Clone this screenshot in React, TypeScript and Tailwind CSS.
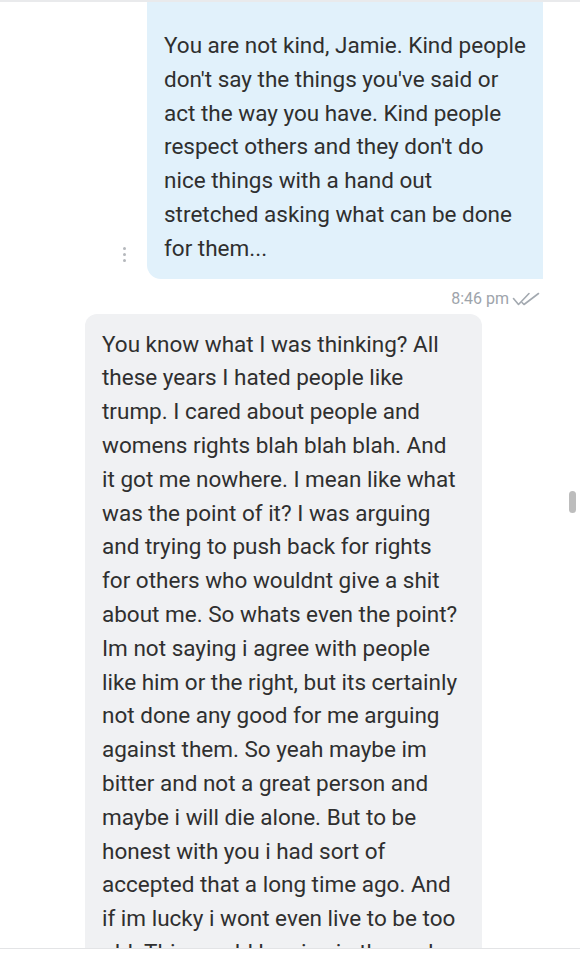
const sent = [
  "You are not kind, Jamie. Kind people",
  "don't say the things you've said or",
  "act the way you have. Kind people",
  "respect others and they don't do",
  "nice things with a hand out",
  "stretched asking what can be done",
  "for them...",
];

const received = [
  "You know what I was thinking? All",
  "these years I hated people like",
  "trump. I cared about people and",
  "womens rights blah blah blah. And",
  "it got me nowhere. I mean like what",
  "was the point of it? I was arguing",
  "and trying to push back for rights",
  "for others who wouldnt give a shit",
  "about me. So whats even the point?",
  "Im not saying i agree with people",
  "like him or the right, but its certainly",
  "not done any good for me arguing",
  "against them. So yeah maybe im",
  "bitter and not a great person and",
  "maybe i will die alone. But to be",
  "honest with you i had sort of",
  "accepted that a long time ago. And",
  "if im lucky i wont even live to be too",
  "old. This would be nice in the end",
];

const DoubleCheck = () => (
  <svg width="28" height="14" viewBox="0 0 28 14" fill="none" stroke="#a3a9b0" strokeWidth="1.6" strokeLinecap="round" strokeLinejoin="round">
    <path d="M1.5 6.5 L6.5 12.5 L17 1.5" />
    <path d="M10 10.5 L12 12.5 L26.5 1.5" />
  </svg>
);

export default function App() {
  return (
    <div
      className="relative h-[960px] w-[580px] overflow-hidden bg-white flex flex-col text-[#2f2f2f]"
      style={{ fontFamily: "Roboto, 'Liberation Sans', sans-serif" }}
    >
      <div className="flex-1 overflow-hidden border-t-2 border-[#e9eaec]">
        <div className="flex items-end justify-end pr-[37px]">
          <div className="flex flex-col gap-[3px] mr-[21px] mb-[17px]">
            <span className="block h-[3px] w-[3px] rounded-full bg-[#b5b8bc]" />
            <span className="block h-[3px] w-[3px] rounded-full bg-[#b5b8bc]" />
            <span className="block h-[3px] w-[3px] rounded-full bg-[#b5b8bc]" />
          </div>
          <div className="w-[396px] bg-[#e1f1fb] rounded-bl-[14px] pl-[17px] pt-[27px] pb-[13px] text-[22.5px] leading-[33.8px]">
            {sent.map((l) => (
              <div key={l} className="whitespace-nowrap">{l}</div>
            ))}
          </div>
        </div>
        <div className="flex items-center justify-end gap-[3px] pr-[40px] mt-[8px] text-[16px] text-[#9ea4ab]">
          <span>8:46 pm</span>
          <DoubleCheck />
        </div>
        <div className="ml-[85px] mt-[3px] w-[397px] bg-[#f0f1f3] rounded-t-[12px] pl-[17px] pt-[14px] text-[22.5px] leading-[33.8px]">
          {received.map((l) => (
            <div key={l} className="whitespace-nowrap">{l}</div>
          ))}
        </div>
      </div>
      <div className="h-[12px] border-t border-[#e3e4e6] bg-white" />
      <div className="absolute right-[4px] top-[491px] h-[22px] w-[7px] rounded-full bg-[#bdbdbd]" />
    </div>
  );
}
